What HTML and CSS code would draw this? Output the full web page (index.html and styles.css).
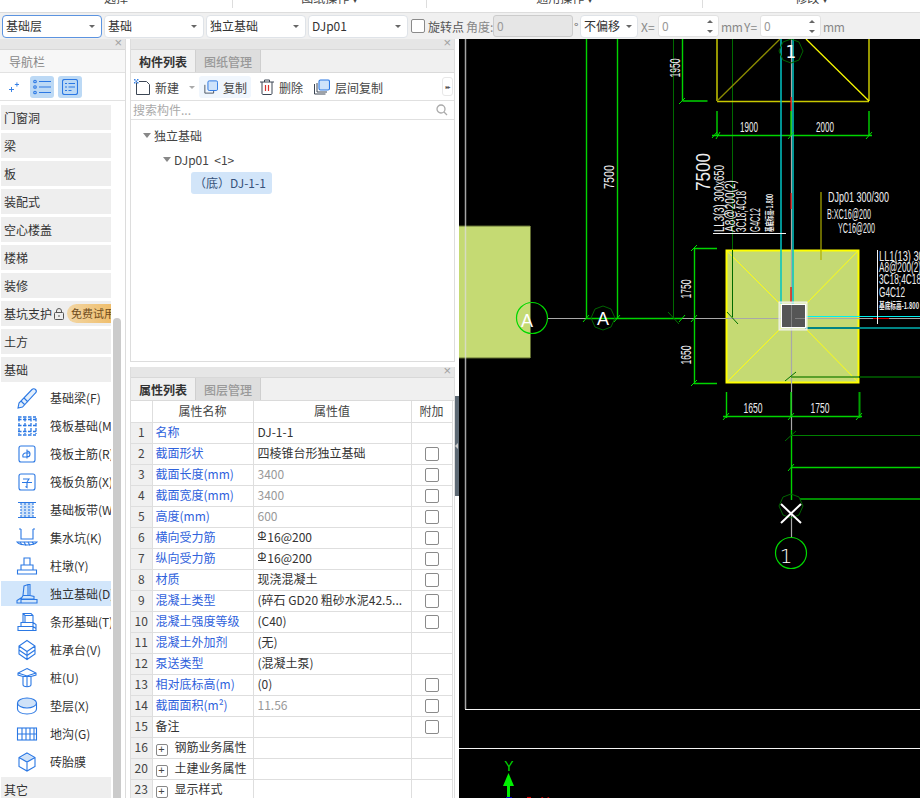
FILE: index.html
```html
<!DOCTYPE html>
<html lang="zh">
<head>
<meta charset="utf-8">
<title>独立基础</title>
<link rel="stylesheet" href="styles.css">
</head>
<body>
<div class="app">
  <div class="ribbon">
    <div class="rib-group rg1"><span>选择</span></div>
    <div class="rib-group rg2"><span>图纸操作 ▾</span></div>
    <div class="rib-group rg3"><span>通用操作 ▾</span></div>
    <div class="rib-group rg4"><span>修改 ▾</span></div>
  </div>
  <div class="toolbar">
    <div class="sel focus"><span>基础层</span><i class="caret"></i></div>
    <div class="sel"><span>基础</span><i class="caret"></i></div>
    <div class="sel"><span>独立基础</span><i class="caret"></i></div>
    <div class="sel"><span>DJp01</span><i class="caret"></i></div>
    <span class="chk tb-chk"></span>
    <span class="tb-t dark">旋转点</span>
    <span class="tb-t angle">角度:</span>
    <div class="inp disabled">0</div>
    <span class="tb-t deg">°</span>
    <div class="sel small"><span>不偏移</span><i class="caret"></i></div>
    <span class="tb-t xl">X=</span>
    <div class="inp num">0<em class="spin"></em></div>
    <span class="tb-t mm">mm</span>
    <span class="tb-t yl">Y=</span>
    <div class="inp num">0<em class="spin"></em></div>
    <span class="tb-t mm">mm</span>
  </div>
  <div class="main">
    <aside class="nav">
      <div class="p-head"><span class="x">×</span></div>
      <div class="nav-title">导航栏</div>
      <div class="nav-tools">
        <svg class="spark" viewBox="0 0 12 14" width="10" height="12"><path d="M0 10h6M3 7v6M7 4h5M9.500 1.500v5" class="ln"/></svg>
        <span class="nt-btn"><svg viewBox="0 0 18 16" width="18" height="16"><path class="ln" d="M6 2.500h12M6 8h12M6 13.500h12"/><circle class="ln" cx="2" cy="2.500" r="1.300"/><circle class="ln" cx="2" cy="8" r="1.300"/><circle class="ln" cx="2" cy="13.500" r="1.300"/></svg></span>
        <span class="nt-btn"><svg viewBox="0 0 16 16" width="16" height="16"><rect class="ln" x=".5" y=".5" width="15" height="15" rx="2"/><path class="ln" d="M3 4.500h2M6.500 4.500h6.500M3 8h2M6.500 8h6.500M3 11.500h2M6.500 11.500h3"/></svg></span>
      </div>
      <div class="nav-list">
        <div class="nav-scroll">
          <div class="cat">门窗洞</div>
          <div class="cat">梁</div>
          <div class="cat">板</div>
          <div class="cat">装配式</div>
          <div class="cat">空心楼盖</div>
          <div class="cat">楼梯</div>
          <div class="cat">装修</div>
          <div class="cat cat-lock">基坑支护<svg class="lock" viewBox="0 0 10 12" width="10" height="12"><rect x=".5" y="4.500" width="9" height="7" rx="1"/><path d="M2.500 4.500V3a2.500 2.500 0 0 1 5 0v1.500M5 7v2"/></svg><span class="trial">免费试用</span></div>
          <div class="cat">土方</div>
          <div class="cat">基础</div>
          <div class="it"><svg viewBox="0 0 22 22" width="22" height="22"><path class="ln soft-fill" d="M2 21l1-5L16 2.500c1-1 2.500-1 3.500 0s1 2.500 0 3.500L6.500 20zM5 14l4 4M8 11l4 4"/></svg><span>基础梁(F)</span></div>
          <div class="it"><svg viewBox="0 0 22 22" width="22" height="22"><path class="ln2" d="M2 4.500h18M2 10.500h18M2 16.500h18M3 3v16M9 3v16M15 3v16M20 3v16M2 20h18M2 2h18"/></svg><span>筏板基础(M)</span></div>
          <div class="it"><svg viewBox="0 0 22 22" width="22" height="22"><rect class="ln" x="3" y="3" width="16" height="16" rx="2"/><path class="ln" d="M11 6.500v9M11 8a3 3 0 1 1 0 6H7a3 3 0 0 1 2-4h5"/></svg><span>筏板主筋(R)</span></div>
          <div class="it"><svg viewBox="0 0 22 22" width="22" height="22"><rect class="ln" x="3" y="3" width="16" height="16" rx="2"/><path class="ln" d="M7 8h6l-2 3M6 11.500h10M11 11.500v5l-1.500-1"/></svg><span>筏板负筋(X)</span></div>
          <div class="it"><svg viewBox="0 0 22 22" width="22" height="22"><rect class="soft" x="5" y="4" width="12" height="14"/><path class="ln" d="M2 3.500h18M2 18.500h18"/><path class="ln" d="M5 4v14M17 4v14M9 4v14M13 4v14" stroke-dasharray="2 1"/></svg><span>基础板带(W)</span></div>
          <div class="it"><svg viewBox="0 0 22 22" width="22" height="22"><path class="ln" d="M5 2v10h12V2M5 2H3M17 2h2"/><path class="ln" d="M1 15c3 4 17 4 20 0z"/><path class="ln" d="M4 15l2 3M8 15l2 3.500M12 15l2 3.500M16 15l2 2"/></svg><span>集水坑(K)</span></div>
          <div class="it"><svg viewBox="0 0 22 22" width="22" height="22"><path class="ln" d="M8 3h6v7H8zM5 10h12v5H5zM1.500 15h19v4h-19z"/></svg><span>柱墩(Y)</span></div>
          <div class="it on"><svg viewBox="0 0 22 22" width="22" height="22"><path class="ln" d="M8 3l4-1.500h2v11H7zM12 1.500V12M14 12.500l4 1v3M7 12.500l-2 3.500h13M1 17.500L5 15v5H1zM5 20h16v-3.500H5"/></svg><span>独立基础(D)</span></div>
          <div class="it"><svg viewBox="0 0 22 22" width="22" height="22"><path class="ln" d="M7 2.500h8l2 2v7H7zM7 2.500l2 2h8M9 4.500v7M5 11.500h12v4H5zM17 11.500l3 2v4M2 15.500h15v4H2zM17 15.500l3 2v2H2"/></svg><span>条形基础(T)</span></div>
          <div class="it"><svg viewBox="0 0 22 22" width="22" height="22"><path class="ln" d="M11 1.500L19 7v8l-8 5.500L3 15V7zM3 7l8 5.500L19 7M11 12.500v8M3 11l8 5.500 8-5.500"/></svg><span>桩承台(V)</span></div>
          <div class="it"><svg viewBox="0 0 22 22" width="22" height="22"><path class="ln" d="M11 1.500l9 4.500v2l-5 1.500H7L2 8V6zM2 6l9 3 9-3M7 9.500v8c0 3 8 3 8 0v-8"/><path class="ln" d="M11 9v11"/></svg><span>桩(U)</span></div>
          <div class="it"><svg viewBox="0 0 22 22" width="22" height="22"><ellipse class="soft ln" cx="11" cy="8" rx="9.500" ry="5"/><path class="ln" d="M1.500 8v6c0 3 4 5 9.500 5s9.500-2 9.500-5V8"/></svg><span>垫层(X)</span></div>
          <div class="it"><svg viewBox="0 0 22 22" width="22" height="22"><rect class="ln" x="1.500" y="5" width="19" height="12"/><path class="ln" d="M1.500 11h19M6 5v12M10 5v12M14 5v12M18 5v12"/></svg><span>地沟(G)</span></div>
          <div class="it"><svg viewBox="0 0 22 22" width="22" height="22"><path class="soft" d="M11 3l7 4-7 4-7-4z"/><path class="ln" d="M11 2l8 4.500v9L11 20l-8-4.500v-9zM3 6.500l8 4.500 8-4.500M11 11v9"/></svg><span>砖胎膜</span></div>
          <div class="cat last">其它</div>
        </div>
        <div class="scroll-track"><div class="scroll-thumb"></div></div>
      </div>
    </aside>
    <div class="mid">
      <section class="panel top-panel">
        <div class="p-head"><span class="x">×</span></div>
        <div class="tabs"><span class="tab active">构件列表</span><span class="tab">图纸管理</span></div>
        <div class="actions">
          <span class="act a-new"><svg viewBox="0 0 16 16" width="16" height="16"><path class="dk" d="M2.500 3.500v12h13v-10l-3-3H5"/><path class="blue-dots" d="M0 0h1.500v1.500H0zM3 0h1.500v1.500H3zM1.500 1.500H3V3H1.500zM0 3h1.500v1.500H0zM3 3h1.500v1.500H3z"/></svg>新建<i class="caret light"></i></span>
          <span class="act hot"><svg viewBox="0 0 16 16" width="16" height="16"><path class="dk" d="M1 5.500V15h10v-3"/><rect class="ln lt" x="4.500" y="1" width="11" height="11" rx="1.500"/></svg>复制</span>
          <span class="act"><svg viewBox="0 0 14 16" width="14" height="16"><path class="dk" d="M0 3h14M4.500 3V1h5v2M2 3v11.500c0 .5.500 1 1 1h8c.5 0 1-.5 1-1V3"/><path class="rd" d="M5.500 6v6M8.500 6v6"/></svg>删除</span>
          <span class="act"><svg viewBox="0 0 16 16" width="16" height="16"><path class="dk" d="M.5 5v10h11M3 4v9h10"/><rect class="ln lt" x="5" y="1" width="10.500" height="10" rx="1.500"/></svg>层间复制</span>
          <span class="more">▸▸</span>
        </div>
        <div class="search"><span>搜索构件...</span><svg viewBox="0 0 12 12" width="12" height="12"><circle cx="5" cy="5" r="4"/><path d="M8 8l3 3"/></svg></div>
        <div class="tree">
          <div class="node n1"><i class="tri"></i>独立基础</div>
          <div class="node n2"><i class="tri"></i>DJp01&nbsp;&nbsp;&lt;1&gt;</div>
          <div class="node n3"><span>（底）DJ-1-1</span></div>
        </div>
      </section>
      <section class="panel bottom-panel">
        <div class="p-head"><span class="x">×</span></div>
        <div class="tabs"><span class="tab active">属性列表</span><span class="tab">图层管理</span></div>
        <table class="grid">
          <colgroup><col class="c0"><col class="c1"><col class="c2"><col class="c3"></colgroup>
          <thead><tr><th class="idx"></th><th>属性名称</th><th>属性值</th><th>附加</th></tr></thead>
          <tbody>
            <tr><td class="idx">1</td><td class="nm">名称</td><td class="val">DJ-1-1</td><td></td></tr>
            <tr><td class="idx">2</td><td class="nm">截面形状</td><td class="val">四棱锥台形独立基础</td><td class="cb"><span class="chk"></span></td></tr>
            <tr><td class="idx">3</td><td class="nm">截面长度(mm)</td><td class="val mute">3400</td><td class="cb"><span class="chk"></span></td></tr>
            <tr><td class="idx">4</td><td class="nm">截面宽度(mm)</td><td class="val mute">3400</td><td class="cb"><span class="chk"></span></td></tr>
            <tr><td class="idx">5</td><td class="nm">高度(mm)</td><td class="val mute">600</td><td class="cb"><span class="chk"></span></td></tr>
            <tr><td class="idx">6</td><td class="nm">横向受力筋</td><td class="val"><span class="phi">Φ</span>16@200</td><td class="cb"><span class="chk"></span></td></tr>
            <tr><td class="idx">7</td><td class="nm">纵向受力筋</td><td class="val"><span class="phi">Φ</span>16@200</td><td class="cb"><span class="chk"></span></td></tr>
            <tr><td class="idx">8</td><td class="nm">材质</td><td class="val">现浇混凝土</td><td class="cb"><span class="chk"></span></td></tr>
            <tr><td class="idx">9</td><td class="nm">混凝土类型</td><td class="val">(碎石 GD20 粗砂水泥42.5...</td><td class="cb"><span class="chk"></span></td></tr>
            <tr><td class="idx">10</td><td class="nm">混凝土强度等级</td><td class="val">(C40)</td><td class="cb"><span class="chk"></span></td></tr>
            <tr><td class="idx">11</td><td class="nm">混凝土外加剂</td><td class="val">(无)</td><td></td></tr>
            <tr><td class="idx">12</td><td class="nm">泵送类型</td><td class="val">(混凝土泵)</td><td></td></tr>
            <tr><td class="idx">13</td><td class="nm">相对底标高(m)</td><td class="val">(0)</td><td class="cb"><span class="chk"></span></td></tr>
            <tr><td class="idx">14</td><td class="nm">截面面积(m²)</td><td class="val mute">11.56</td><td class="cb"><span class="chk"></span></td></tr>
            <tr><td class="idx">15</td><td class="plain">备注</td><td class="val"></td><td class="cb"><span class="chk"></span></td></tr>
            <tr><td class="idx">16</td><td class="plain"><span class="plus">+</span>钢筋业务属性</td><td></td><td></td></tr>
            <tr><td class="idx">20</td><td class="plain"><span class="plus">+</span>土建业务属性</td><td></td><td></td></tr>
            <tr><td class="idx">23</td><td class="plain"><span class="plus">+</span>显示样式</td><td></td><td></td></tr>
          </tbody>
        </table>
      </section>
    </div>
    <div class="splitter"><div class="handle"><i></i></div></div>
    <div class="canvas">
      <svg class="cad" viewBox="459 39 461 759" width="461" height="759">
        <!-- left footing -->
        <rect class="pad-fill" x="459" y="226" width="71" height="132"/>
        <path class="c-edge" d="M530.500 226v132M459 226h71M459 358h71"/>
        <!-- frame -->
        <path class="c-gray2" d="M465.500 39v670"/>
        <path class="c-white" d="M465 709.500h455M459 748.500h461"/>
        <!-- verticals -->
        <path class="c-green" d="M586.500 39v279M617.500 39v279M682.500 39v62M682.500 101h25M586 318.500h96"/>
        <path class="c-dkgreen" d="M673.500 39v279M732.500 39v278"/>
        <!-- top yellow -->
        <path class="c-olive" d="M717 39v62M869 39v62M717 101.500h152"/>
        <path class="c-dia1" d="M717 101L780 39"/>
        <path class="c-dia2" d="M869 101L806 39"/>
        <!-- top dim -->
        <path class="c-green" d="M712 135.500h160M717 111v24M869 111v24"/>
        <!-- main pad -->
        <rect class="pad" x="726.500" y="250.500" width="132" height="132"/>
        <path class="c-yl" d="M727 251l54 54M858 251l-53 54M727 382l54-54M858 382l-53-54"/>
        <path class="c-dkgreen" d="M732.500 250v67"/>
        <path class="c-leader" d="M821 192v68"/>
        <!-- axes -->
        <path class="c-gray" d="M547 318.500h39M682 318.500h238M791.500 39v98M791.500 137v213M791.500 350v66M791.500 416v14"/>
        <path class="c-gray" d="M791.500 513v25"/>
        <path class="c-cyan" d="M781 39v265M793 39v265"/>
        <path class="c-cyan2" d="M805 316.500h115"/>
        <path class="c-teal" d="M805 328h115"/>
        <path class="c-red" d="M791 97v14M791 193v16M791 287v15M873 318.500h16"/>
        <path class="c-green" d="M791 111v24M791 392v24M726.500 392v26M723 416.500h139M694.500 248v135M694 248.500h23M694 383.500h23M791.500 430v70M791 467.500h129"/>
        <path class="c-dkgreen3" d="M859.500 392v26"/>
        <path class="c-dkgreen2" d="M791 435.500h129"/>
        <path class="c-moss" d="M791 377h68"/>
        <path class="c-dkg4" d="M859 377h61"/>
        <path class="c-dkg5" d="M800 499h120"/>
        <!-- ticks -->
        <path class="c-tick" d="M712 138l5-6M716 139l4-7M788 139l6-7M866 139l6-7M679 104l6-6M691 251l6-6M691 386l6-6M723 420l6-7M788 420l6-7M856 420l6-7M583 322l6-7M614 322l6-7M679 322l6-7M691 322l6-7M788 471l6-7"/>
        <path class="c-dktick" d="M668 312l11 12M727 312l11 12M785 381l11-9M785 441l11-10"/>
        <!-- column -->
        <rect class="col-o" x="779" y="302" width="28" height="28"/>
        <rect class="col-i" x="781.500" y="304.500" width="24" height="23"/>
        <path class="c-mark" d="M791.500 305v22M795 318.500h10"/>
        <!-- axis circles -->
        <circle class="c-ring" cx="532" cy="318" r="15.500"/>
        <circle class="c-ring" cx="791" cy="553" r="15.500"/>
        <polygon class="c-oct" points="603,306 611,309 615,318 611,327 603,330 595,327 591,318 595,309"/>
        <polygon class="c-oct" points="791,39 799,42 803,51 799,60 791,63 783,60 779,51 783,42"/>
        <polygon class="c-oct" points="791,494 799,497 803,506 799,515 791,518 783,515 779,506 783,497"/>
        <path class="c-x" d="M781 504l20 19M801 504l-20 19"/>
        <!-- texts -->
        <text class="t ax-a" x="527" y="327" text-anchor="middle">A</text>
        <text class="t ax-a" x="603" y="325" text-anchor="middle">A</text>
        <text class="t ax thin" x="786" y="563" text-anchor="middle">1</text>
        <text class="t ax" x="791" y="58" text-anchor="middle">1</text>
        <text class="t d" x="749" y="132" text-anchor="middle" textLength="18" lengthAdjust="spacingAndGlyphs">1900</text>
        <text class="t d" x="825" y="132" text-anchor="middle" textLength="18" lengthAdjust="spacingAndGlyphs">2000</text>
        <text class="t d" x="753" y="413" text-anchor="middle" textLength="19" lengthAdjust="spacingAndGlyphs">1650</text>
        <text class="t d" x="820" y="413" text-anchor="middle" textLength="19" lengthAdjust="spacingAndGlyphs">1750</text>
        <text class="t d" transform="rotate(-90 680 68)" x="680" y="68" text-anchor="middle" textLength="19" lengthAdjust="spacingAndGlyphs">1950</text>
        <text class="t d" transform="rotate(-90 691 289)" x="691" y="289" text-anchor="middle" textLength="19" lengthAdjust="spacingAndGlyphs">1750</text>
        <text class="t d" transform="rotate(-90 691 355)" x="691" y="355" text-anchor="middle" textLength="19" lengthAdjust="spacingAndGlyphs">1650</text>
        <text class="t d" transform="rotate(-90 614 177)" x="614" y="177" text-anchor="middle" textLength="24" lengthAdjust="spacingAndGlyphs">7500</text>
        <text class="t big" transform="rotate(-90 710 172)" x="710" y="172" text-anchor="middle" textLength="38" lengthAdjust="spacingAndGlyphs">7500</text>
        <text class="t s" transform="rotate(-90 724 232)" x="724" y="232" textLength="67" lengthAdjust="spacingAndGlyphs">LL3(3) 300x650</text>
        <text class="t s" transform="rotate(-90 735 232)" x="735" y="232" textLength="52" lengthAdjust="spacingAndGlyphs">A8@200(2)</text>
        <text class="t s" transform="rotate(-90 746 232)" x="746" y="232" textLength="41" lengthAdjust="spacingAndGlyphs">3C18;4C18</text>
        <text class="t s" transform="rotate(-90 760 232)" x="760" y="232" textLength="24" lengthAdjust="spacingAndGlyphs">G4C12</text>
        <text class="t xs" transform="rotate(-90 773 232)" x="773" y="232" textLength="38" lengthAdjust="spacingAndGlyphs">基底标高-1.800</text>
        <path class="c-white" d="M713 233.500h73M877.500 250v74"/>
        <text class="t s2" x="828" y="202" textLength="61" lengthAdjust="spacingAndGlyphs">DJp01 300/300</text>
        <text class="t s2" x="827" y="219" textLength="44" lengthAdjust="spacingAndGlyphs">B:XC16@200</text>
        <text class="t s2" x="838" y="233" textLength="37" lengthAdjust="spacingAndGlyphs">YC16@200</text>
        <text class="t s2" x="879" y="261" textLength="70" lengthAdjust="spacingAndGlyphs">LL1(13) 300x650</text>
        <text class="t s2" x="879" y="272" textLength="42" lengthAdjust="spacingAndGlyphs">A8@200(2)</text>
        <text class="t s2" x="879" y="284" textLength="42" lengthAdjust="spacingAndGlyphs">3C18;4C18</text>
        <text class="t s2" x="879" y="297" textLength="26" lengthAdjust="spacingAndGlyphs">G4C12</text>
        <text class="t xs" x="879" y="309" textLength="40" lengthAdjust="spacingAndGlyphs">基底标高-1.800</text>
        <!-- ucs -->
        <text class="t ucs-y" x="509" y="771" text-anchor="middle">Y</text>
        <path class="ucs" d="M507 798v-12h-4l5.500-13 5.500 13h-4v12z"/>
        <path class="ucs-b" d="M506 797h6v1h-6z"/>
        <path class="c-red" d="M527 797.500h4"/>
        <text class="t ucs-x" x="545" y="807" text-anchor="middle">X</text>
      </svg>
    </div>
  </div>
</div>
</body>
</html>
```
FILE: styles.css
```css
* { box-sizing: border-box; }
html, body { margin: 0; padding: 0; background: #fff; }
body { font-family: "Noto Sans CJK SC", "Noto Sans", sans-serif; font-size: 12px; color: #333; }
.app { width: 920px; height: 798px; overflow: hidden; display: flex; flex-direction: column; }

.ribbon { height: 12px; display: flex; overflow: hidden; background: #fff; flex: none; }
.rib-group { height: 8px; border-right: 1px solid #ddd; overflow: hidden; text-align: center; font-size: 12px; line-height: 18px; color: #444; }
.rib-group span { display: block; margin-top: -11px; white-space: nowrap; }
.rg1 { width: 233px; }
.rg2 { width: 194px; }
.rg3 { width: 276px; }
.rg4 { width: 217px; border-right: 0; }

.toolbar { height: 27px; flex: none; background: #f0f0f0; border-top: 1px solid #ddd; display: flex; align-items: center; padding-left: 2px; color: #888; }
.sel { width: 100px; height: 23px; margin-right: 2px; background: #fff; border: 1px solid #dfe3e8; border-radius: 4px; display: flex; align-items: center; justify-content: space-between; padding: 0 6px 0 3px; color: #333; line-height: 20px; }
.sel.focus { border-color: #5b93e0; }
.sel.small { width: 58px; padding-right: 5px; margin-left: 0; margin-right: 3px; }
.caret { display: block; width: 0; height: 0; border-left: 3px solid transparent; border-right: 3px solid transparent; border-top: 3px solid #666; }
.caret.light { border-top-color: #aaa; margin-left: 5px; }
.chk { display: inline-block; width: 14px; height: 14px; border: 1px solid #8a8a8a; border-radius: 2px; background: #fff; vertical-align: middle; }
.tb-chk { margin-left: 1px; margin-right: 3px; }
.tb-t { white-space: nowrap; }
.tb-t.dark { color: #555; }
.angle { margin-left: 2px; width: 27px; }
.inp { height: 22px; background: #fff; border: 1px solid #e2e2e2; border-radius: 3px; padding: 0 2px 0 3px; line-height: 20px; color: #999; width: 61px; position: relative; flex: none; }
.inp.disabled { width: 80px; background: #e6e6e6; border-color: #ccc; }
.deg { margin-left: 1px; width: 6px; color: #666; }
.xl { width: 17px; }
.yl { width: 16px; margin-left: 2px; }
.mm { margin-left: 2px; width: 21px; letter-spacing: -.3px; }
.spin { position: absolute; right: 5px; top: 4px; height: 13px; width: 6px; }
.spin::before, .spin::after { content: ""; position: absolute; left: 0; border-left: 3px solid transparent; border-right: 3px solid transparent; }
.spin::before { top: 0; border-bottom: 3px solid #666; }
.spin::after { bottom: 0; border-top: 3px solid #666; }

.main { flex: 1; display: flex; min-height: 0; }
.p-head { height: 11px; background: #e6e6e6; border-bottom: 1px solid #d8d8d8; position: relative; flex: none; }
.x { position: absolute; right: 3px; top: -4px; font-size: 13px; line-height: 16px; color: #a0a0a0; font-family: "Liberation Sans", sans-serif; }

.nav { width: 126px; flex: none; border-right: 1px solid #dcdcdc; display: flex; flex-direction: column; margin-right: 4px; }
.nav-title { height: 23px; background: #f7f7f7; border-bottom: 1px solid #e2e2e2; padding-left: 9px; line-height: 24px; color: #888; flex: none; }
.nav-tools { height: 28px; border-bottom: 1px solid #e2e2e2; display: flex; align-items: center; padding: 0 0 0 9px; flex: none; }
.spark { margin-right: 11px; }
.nt-btn { width: 24px; height: 22px; background: #bcd9f5; border-radius: 3px; display: flex; align-items: center; justify-content: center; margin-right: 4px; }
.ln { fill: none; stroke: #2b78e4; stroke-width: 1.100; }
.soft-fill { fill: #e3effc; }
.ln2 { fill: none; stroke: #2b78e4; stroke-width: 1.300; stroke-dasharray: 3.500 1.500; }
.soft { fill: #cfe2f8; }
ellipse.soft.ln { fill: #cfe2f8; }
.nav-list { flex: 1; display: flex; min-height: 0; overflow: hidden; padding-top: 4px; }
.nav-scroll { width: 111px; flex: none; padding-left: 1px; }
.cat { height: 25px; margin-bottom: 3px; background: #eeeeee; padding-left: 3px; line-height: 24px; color: #333; white-space: nowrap; overflow: hidden; display: flex; align-items: center; }
.cat-lock .lock { fill: none; stroke: #555; margin-left: 2px; flex: none; }
.trial { background: linear-gradient(90deg, #f2d6a4, #efbd6a); border-radius: 10px 0 0 10px; padding: 0 0 0 4px; margin-left: 3px; height: 19px; line-height: 19px; color: #704d1c; flex: none; width: 46px; overflow: hidden; white-space: nowrap; font-size: 11px; }
.it { height: 25px; margin-bottom: 3px; display: flex; align-items: center; padding-left: 15px; white-space: nowrap; overflow: hidden; }
.it svg { flex: none; margin-right: 12px; }
.it.on { background: #d2e6fb; }
.cat.last { margin-bottom: 0; }
.scroll-track { width: 14px; position: relative; flex: none; }
.scroll-thumb { position: absolute; left: 2px; top: 213px; bottom: 0; width: 8px; background: #cbcbcb; border-radius: 4px 4px 0 0; }

.mid { width: 325px; flex: none; display: flex; flex-direction: column; gap: 5px; }
.panel { display: flex; flex-direction: column; border-left: 1px solid #ddd; border-right: 1px solid #ddd; overflow: hidden; background: #fff; }
.top-panel { height: 323px; border-bottom: 1px solid #ddd; flex: none; }
.bottom-panel { flex: 1; min-height: 0; }
.tabs { display: flex; height: 23px; background: #f0f0f0; border-bottom: 1px solid #dadada; flex: none; }
.tab { width: 65px; text-align: center; line-height: 23px; color: #999; background: #dedede; border-right: 1px solid #cfcfcf; font-weight: 500; }
.tab.active { background: #f0f0f0; color: #333; font-weight: 700; }
.actions { height: 28px; flex: none; border-bottom: 1px solid #e0e0e0; display: flex; align-items: center; padding: 1px 0 0 3px; position: relative; color: #444; }
.act { display: flex; align-items: center; gap: 5px; height: 22px; padding: 0 4px 0 0; white-space: nowrap; }
.a-new { padding-right: 4px; }
.hot { background: #f0f6fd; border-radius: 3px; padding: 0 4px 0 5px; width: 52px; margin-right: 9px; }
.act + .act + .act { margin-right: 7px; }
.dk { fill: none; stroke: #3c4654; stroke-width: 1; }
.lt { fill: #cfe3fa; }
.rd { fill: none; stroke: #d9322d; stroke-width: 1.200; }
.blue-dots { fill: #3e86e6; }
.more { position: absolute; right: 1px; top: 4px; width: 11px; height: 19px; border: 1px solid #e8e8e8; border-radius: 3px; font-size: 6px; line-height: 17px; text-align: center; letter-spacing: -1px; color: #555; background: #fff; font-family: "DejaVu Sans", sans-serif; padding: 0; overflow: hidden; white-space: nowrap; }
.search { height: 19px; flex: none; border-bottom: 1px solid #e0e0e0; display: flex; align-items: center; justify-content: space-between; padding: 0 6px 0 2px; color: #aaa; line-height: 20px; }
.search svg { fill: none; stroke: #aaa; stroke-width: 1.300; }
.tree { flex: 1; padding-top: 3px; color: #444; }
.node { display: flex; align-items: center; height: 24px; white-space: nowrap; }
.tri { display: block; width: 0; height: 0; border-left: 4px solid transparent; border-right: 4px solid transparent; border-top: 5px solid #888; margin-right: 3px; }
.n1 { padding-left: 12px; }
.n2 { padding-left: 32px; }
.n3 { padding-left: 60px; }
.n3 span { background: #d2e5f9; width: 81px; height: 22px; line-height: 21px; border-radius: 3px; padding-left: 3px; color: #36527a; }

.grid { width: 321px; table-layout: fixed; border-collapse: collapse; flex: none; }
.c0 { width: 21px; } .c1 { width: 101px; } .c2 { width: 158px; } .c3 { width: 41px; }
.grid th, .grid td { height: 21px; padding: 0 0 2px 3px; border: 1px solid #dedede; font-weight: 400; line-height: 18px; white-space: nowrap; overflow: hidden; color: #333; }
.grid th { text-align: center; padding: 0; color: #444; }
.grid tr > :first-child { border-left: 0; }
.grid thead th { border-top: 0; }
.grid .idx { background: #f0f0f0; text-align: center; padding: 0 0 2px; color: #444; }
.grid thead .idx { background: #fff; }
.grid .nm { color: #2f62dc; padding-left: 3px; }
.grid .val { padding-left: 4px; }
.grid .mute { color: #999; }
.grid .cb { padding: 0 0 2px; text-align: center; }
.phi { display: inline-block; font-size: 11px; line-height: 9px; border-bottom: 1px solid #333; vertical-align: 3px; margin-right: 1px; }
.plus { display: inline-block; width: 12px; height: 12px; border: 1px solid #888; border-radius: 2px; text-align: center; line-height: 9px; font-size: 11px; margin-right: 7px; vertical-align: -1px; color: #444; font-family: "Liberation Sans", sans-serif; }

.splitter { width: 4px; flex: none; position: relative; background: #fff; }
.handle { width: 4px; height: 100px; margin-top: 357px; background: #5e6a75; position: relative; }
.handle i { position: absolute; left: 0; top: 47px; border-top: 3px solid transparent; border-bottom: 3px solid transparent; border-right: 3px solid #ccc; }

.canvas { flex: 1; background: #000; overflow: hidden; }
.cad { display: block; }
.cad path, .cad rect, .cad polygon, .cad circle { fill: none; }
.cad rect.pad-fill { fill: #c5da73; }
.cad rect.pad { fill: #c5da73; stroke: #ffff00; stroke-width: 2; }
.c-edge { stroke: #5f6a30; stroke-width: 1; }
.c-gray { stroke: #a8a8a8; stroke-width: 1.200; }
.c-gray2 { stroke: rgba(220,220,220,.75); stroke-width: 1.500; }
.c-white { stroke: #f4f4f4; stroke-width: 1; }
.c-green { stroke: #00d400; stroke-width: 1.400; }
.c-dkgreen { stroke: #006a00; stroke-width: 1; }
.c-dkgreen2 { stroke: #008000; stroke-width: 1; }
.c-dkgreen3 { stroke: #00a000; stroke-width: 2; }
.c-dkg4 { stroke: #004a00; stroke-width: 2; }
.c-dkg5 { stroke: #008c00; stroke-width: 2; }
.c-moss { stroke: #5aa02a; stroke-width: 2; }
.c-olive { stroke: #c8c800; stroke-width: 1.500; }
.c-dia1 { stroke: #8a8a00; stroke-width: 1.300; }
.c-dia2 { stroke: #f8f800; stroke-width: 1.300; }
.c-yl { stroke: #ffff10; stroke-width: 1; }
.c-leader { stroke: #b0b000; stroke-width: 1.200; }
.c-cyan { stroke: #00c4c4; stroke-width: 1.500; }
.c-cyan2 { stroke: #00f0f0; stroke-width: 1.200; }
.c-teal { stroke: #008484; stroke-width: 2; }
.c-red { stroke: #e00000; stroke-width: 1.200; }
.c-tick { stroke: #00e000; stroke-width: 1; }
.c-dktick { stroke: #007000; stroke-width: 1; }
.c-mark { stroke: #808080; stroke-width: 1; }
.cad rect.col-o { fill: rgba(255,255,255,.55); stroke: #f0f0f0; stroke-width: 1; }
.cad rect.col-i { fill: #565656; stroke: #fff; stroke-width: 1; }
.c-ring { stroke: #00d800; stroke-width: 1.200; }
.c-oct { stroke: #006400; stroke-width: 1; }
.c-x { stroke: #fff; stroke-width: 2; }
.t { fill: #eeeeee; font-family: "Liberation Sans Narrow", "Liberation Sans", sans-serif; }
.ax { font-size: 17px; font-family: "DejaVu Sans", sans-serif; fill: #fff; }
.ax.thin { font-size: 20px; font-weight: 200; }
.ax-a { font-size: 18px; font-family: "Liberation Sans", sans-serif; fill: #fff; }
.d { font-size: 15px; }
.big { font-size: 20px; }
.s { font-size: 14px; }
.s2 { font-size: 14px; }
.xs { font-size: 9px; font-family: "Noto Sans CJK SC", sans-serif; font-weight: 700; }
.ucs-y { fill: #00d800; font-size: 14px; }
.ucs-x { fill: #d00000; font-size: 14px; }
.cad path.ucs { fill: #00f000; }
.cad path.ucs-b { fill: #0000c0; }
```
